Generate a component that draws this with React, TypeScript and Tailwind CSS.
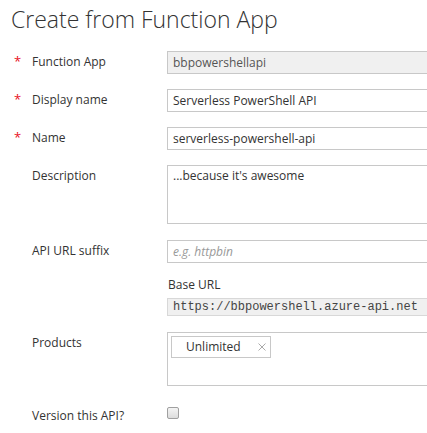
import React from "react";

const F = { fontFamily: '"Open Sans", "Noto Sans", sans-serif' };

function Label({ text, req }: { text: string; req?: boolean }) {
  return (
    <div className="w-[167px] shrink-0 flex items-start text-[12px] text-[#333] leading-[16px] pt-[3px]">
      <span className="w-[32px] shrink-0 pl-[14px] text-[#e81123] text-[13px] leading-[14px]">{req ? "*" : ""}</span>
      <span>{text}</span>
    </div>
  );
}

export default function App() {
  return (
    <div className="w-[427px] h-[433px] overflow-hidden bg-white" style={F}>
      <div className="pl-[11px] pt-[4px] text-[23px] font-light text-[#333] leading-[30px] whitespace-nowrap">
        Create from Function App
      </div>
      <div className="mt-[17px] flex flex-col">
        <div className="flex h-[23px]">
          <Label text="Function App" req />
          <div className="shrink-0 w-[300px] h-[23px] border border-[#c8c8c8] bg-[#f0f0f0] px-[5px] text-[12px] leading-[21px] text-[#555]">bbpowershellapi</div>
        </div>
        <div className="flex h-[23px] mt-[15px]">
          <Label text="Display name" req />
          <div className="shrink-0 w-[300px] h-[23px] border border-[#c8c8c8] bg-white px-[5px] text-[12px] leading-[21px] text-[#333]">Serverless PowerShell API</div>
        </div>
        <div className="flex h-[23px] mt-[15px]">
          <Label text="Name" req />
          <div className="shrink-0 w-[300px] h-[23px] border border-[#c8c8c8] bg-white px-[5px] text-[12px] leading-[21px] text-[#333]">serverless-powershell-api</div>
        </div>
        <div className="flex h-[59px] mt-[15px]">
          <Label text="Description" />
          <div className="shrink-0 w-[300px] h-[59px] border border-[#c8c8c8] bg-white px-[5px] pt-[1px] text-[12px] leading-[18px] text-[#333]">...because it's awesome</div>
        </div>
        <div className="flex h-[23px] mt-[16px]">
          <Label text="API URL suffix" />
          <div className="shrink-0 w-[300px] h-[23px] border border-[#c8c8c8] bg-white px-[5px] text-[12px] leading-[21px] text-[#999] italic">e.g. httpbin</div>
        </div>
        <div className="flex mt-[14px]">
          <div className="w-[167px] shrink-0" />
          <div className="text-[12px] leading-[16px] text-[#333] pl-[1px]">Base URL</div>
        </div>
        <div className="flex mt-[5px]">
          <div className="w-[167px] shrink-0" />
          <div
            className="shrink-0 w-[300px] h-[18px] border border-[#d8d8d8] bg-[#f0f0f0] px-[5px] text-[12px] leading-[16px] text-[#444]"
            style={{ fontFamily: '"Liberation Mono", "DejaVu Sans Mono", monospace' }}
          >
            https://bbpowershell.azure-api.net
          </div>
        </div>
        <div className="flex h-[54px] mt-[16px]">
          <Label text="Products" />
          <div className="shrink-0 w-[300px] h-[54px] border border-[#c8c8c8] bg-white pl-[3px] pt-[3px]">
            <div className="w-[100px] h-[22px] border border-[#c8c8c8] flex items-center text-[12px] text-[#333]">
              <span className="pl-[14px]">Unlimited</span>
              <svg className="ml-[17px]" width="8" height="8" viewBox="0 0 8 8">
                <path d="M0.5 0.5 L7.5 7.5 M7.5 0.5 L0.5 7.5" stroke="#aaa" strokeWidth="1" fill="none" />
              </svg>
            </div>
          </div>
        </div>
        <div className="flex mt-[19px] items-start">
          <Label text="Version this API?" />
          <div className="mt-[2px] w-[12px] h-[12px] rounded-[2px] border border-[#a0a0a0] bg-gradient-to-b from-[#f4f4f4] to-[#dcdcdc]" />
        </div>
      </div>
    </div>
  );
}
